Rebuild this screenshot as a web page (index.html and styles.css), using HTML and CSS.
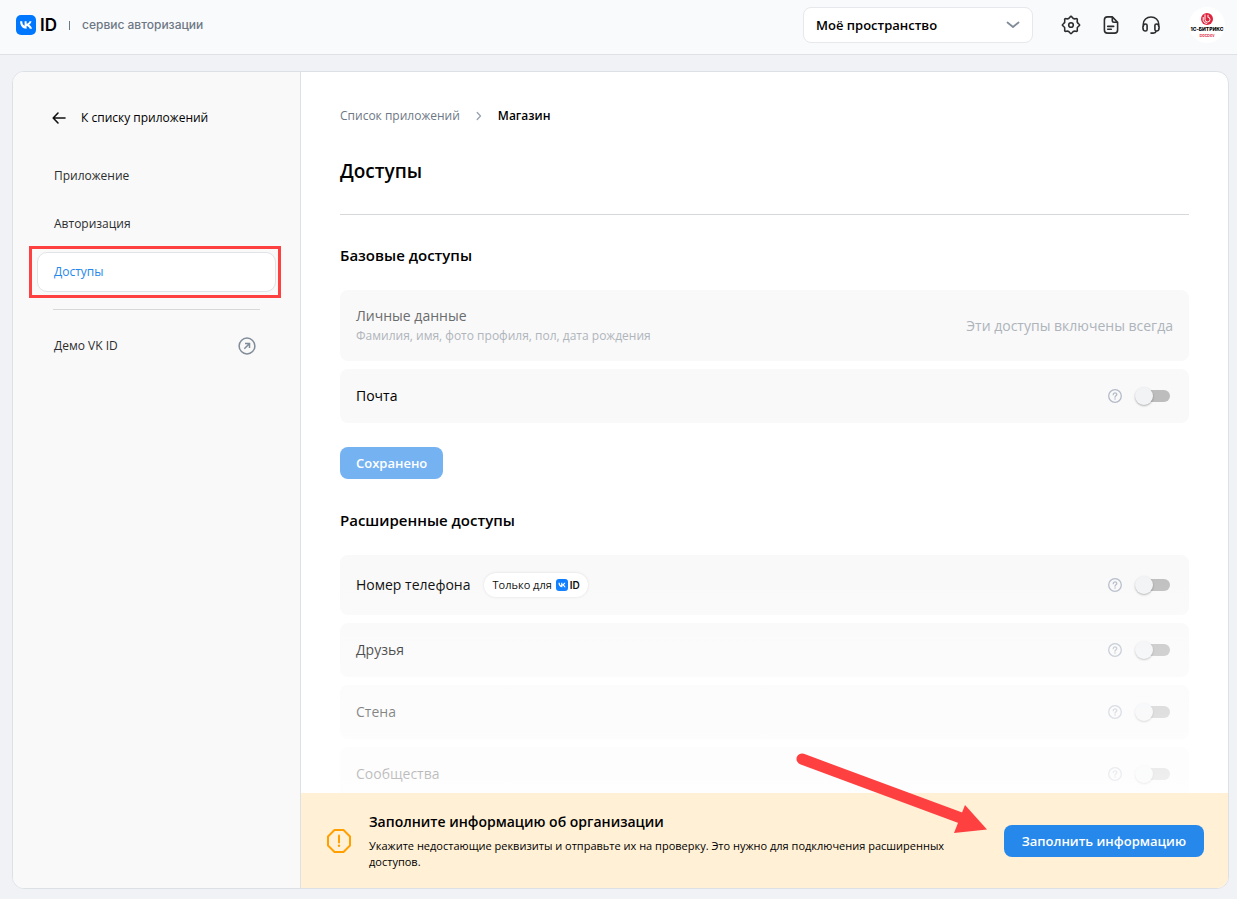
FILE: index.html
```html
<!DOCTYPE html>
<html lang="ru">
<head>
<meta charset="utf-8">
<meta name="viewport" content="width=device-width, initial-scale=1">
<title>VK ID — Доступы</title>
<link rel="stylesheet" href="styles.css">
</head>
<body>
<svg class="sprite" aria-hidden="true">
  <symbol id="vk" viewBox="0 0 20 20">
    <rect width="20" height="20" rx="5" fill="#0077ff"/>
    <path d="M3.400 6.200h2.100c.1 2.900 1.400 4.200 2.400 4.500V6.200h2v2.600c1.200-.1 2.400-1.300 2.900-2.600h2c-.3 1.700-1.600 3-2.500 3.600.9.400 2.400 1.500 3 3.900h-2.200c-.5-1.500-1.700-2.600-3.200-2.800v2.800h-.3C6.100 13.700 3.500 11 3.400 6.200z" fill="#fff" transform="translate(.7 0)"/>
  </symbol>
  <symbol id="help" viewBox="0 0 16 16">
    <circle cx="8" cy="8" r="6.300" fill="none" stroke="#b3bac8" stroke-width="1.300"/>
    <path d="M6.200 6.700C6.200 4.300 9.800 4.400 9.800 6.500 9.800 7.700 8 7.800 8 9.200" fill="none" stroke="#b3bac8" stroke-width="1.300" stroke-linecap="round"/>
    <circle cx="8" cy="11" r=".8" fill="#b3bac8"/>
  </symbol>
</svg>

<header class="topbar">
  <a class="brand" href="#">
    <svg class="brand-mark" aria-hidden="true"><use href="#vk"/></svg>
    <span class="brand-id">ID</span>
    <span class="brand-sep"></span>
    <span class="brand-sub">сервис авторизации</span>
  </a>
  <div class="space">
    <select class="space-select" aria-label="Пространство"><option>Моё пространство</option></select>
    <svg class="space-chevron" viewBox="0 0 14 8" aria-hidden="true"><path d="M1.500 1.500 7 6l5.500-4.500" fill="none" stroke="#818c99" stroke-width="1.800" stroke-linecap="round" stroke-linejoin="round"/></svg>
  </div>
  <nav class="tools" aria-label="Инструменты">
    <button class="tool" type="button" aria-label="Настройки">
      <svg viewBox="0 0 20 20"><path d="M11.190 2.340Q12.370 4.270 14.580 3.740Q16.790 3.210 16.260 5.420Q15.730 7.630 17.660 8.810Q19.600 10 17.660 11.190Q15.730 12.370 16.260 14.580Q16.790 16.790 14.580 16.260Q12.370 15.730 11.190 17.660Q10 19.600 8.810 17.660Q7.630 15.730 5.420 16.260Q3.210 16.790 3.740 14.580Q4.270 12.370 2.340 11.190Q.4 10 2.340 8.810Q4.270 7.630 3.740 5.420Q3.210 3.210 5.420 3.740Q7.630 4.270 8.810 2.340Q10 .4 11.190 2.340z"/><circle cx="10" cy="10" r="2.300"/></svg>
    </button>
    <button class="tool" type="button" aria-label="Документация">
      <svg viewBox="0 0 20 20"><path d="M11.300 1.900H6.500C4.300 1.900 3.400 3 3.400 5v10c0 2 .9 3.100 3.100 3.100h7c2.200 0 3.100-1.100 3.100-3.100V7.200zM11.300 2v3.600c0 1.200.5 1.700 1.700 1.700h3.500M6.700 11.400h6M6.700 14.200h3.600"/></svg>
    </button>
    <button class="tool" type="button" aria-label="Поддержка">
      <svg viewBox="0 0 20 20"><path d="M2.300 11.500V9.300C2.300 5 5.600 2 10 2S17.700 5 17.700 9.300v2.200M4.500 9c-1.500 0-2.600 1.300-2.600 3.400S3 16 4.500 16c1 0 1.600-.6 1.600-1.600v-3.800C6.100 9.600 5.500 9 4.500 9zM15.500 9c1.500 0 2.600 1.300 2.600 3.400S17 16 15.500 16c-1 0-1.600-.6-1.600-1.600v-3.800c0-1 .6-1.600 1.600-1.600zM15.400 16c-.5 1.400-1.700 2.100-3.200 2.100H10"/></svg>
    </button>
  </nav>
  <button class="avatar" type="button" aria-label="Профиль">
    <svg class="avatar-logo" viewBox="0 0 14 14" aria-hidden="true"><circle cx="7" cy="7" r="6" fill="#e0233c"/><path d="M5 2.500v5a2.500 2.500 0 1 0 2.500-2.500M8 2.800v2M3.200 5v3.500a4 4 0 0 0 4 3" fill="none" stroke="#fff" stroke-width="1"/></svg>
    <span class="avatar-name">1С-БИТРИКС</span>
    <span class="avatar-tag">DocDev</span>
  </button>
</header>

<div class="card">
  <aside class="sidebar">
    <a class="back" href="#">
      <svg class="back-icon" viewBox="0 0 14 14" aria-hidden="true"><path d="M13 7H1.500M6 2 1.200 7 6 12" fill="none" stroke="#111" stroke-width="1.600" stroke-linecap="round" stroke-linejoin="round"/></svg>
      К списку приложений
    </a>
    <nav class="menu" aria-label="Разделы">
      <a class="menu-item" href="#">Приложение</a>
      <a class="menu-item" href="#">Авторизация</a>
      <a class="menu-item menu-item-active" href="#" aria-current="page">Доступы</a>
    </nav>
    <hr class="menu-line">
    <a class="menu-item demo" href="#">Демо VK ID
      <svg class="demo-icon" viewBox="0 0 18 18" aria-hidden="true"><g fill="none" stroke="#818c99" stroke-width="1.500"><circle cx="9" cy="9" r="7.900"/><path d="M6.300 11.700l5-5M7 6.500h4.500V11"/></g></svg>
    </a>
  </aside>

  <main class="main">
    <div class="content">
      <nav class="crumbs" aria-label="Путь">
        <a class="crumb" href="#">Список приложений</a>
        <svg class="crumb-sep" viewBox="0 0 6 10" aria-hidden="true"><path d="M1.200 1.500 4.500 5 1.200 8.500" fill="none" stroke="#99a2ad" stroke-width="1.300" stroke-linecap="round" stroke-linejoin="round"/></svg>
        <span class="crumb-current">Магазин</span>
      </nav>
      <h1 class="title">Доступы</h1>

      <h2 class="subtitle">Базовые доступы</h2>
      <div class="rows">
        <div class="row row-info">
          <div class="row-text">
            <div class="row-name">Личные данные</div>
            <div class="row-desc">Фамилия, имя, фото профиля, пол, дата рождения</div>
          </div>
          <div class="row-note">Эти доступы включены всегда</div>
        </div>
        <div class="row">
          <label class="row-name" for="mail">Почта</label>
          <button class="help" type="button" aria-label="Подсказка: Почта"><svg><use href="#help"/></svg></button>
          <input class="switch" type="checkbox" role="switch" id="mail">
        </div>
      </div>
      <button class="button button-saved" type="button">Сохранено</button>

      <h2 class="subtitle">Расширенные доступы</h2>
      <div class="rows">
        <div class="row row-phone">
          <label class="row-name" for="phone">Номер телефона</label>
          <span class="chip">Только для <svg class="chip-mark" aria-hidden="true"><use href="#vk"/></svg><b class="chip-id">ID</b></span>
          <button class="help" type="button" aria-label="Подсказка: Номер телефона"><svg><use href="#help"/></svg></button>
          <input class="switch" type="checkbox" role="switch" id="phone">
        </div>
        <div class="row">
          <label class="row-name" for="friends">Друзья</label>
          <button class="help" type="button" aria-label="Подсказка: Друзья"><svg><use href="#help"/></svg></button>
          <input class="switch" type="checkbox" role="switch" id="friends">
        </div>
        <div class="row">
          <label class="row-name" for="wall">Стена</label>
          <button class="help" type="button" aria-label="Подсказка: Стена"><svg><use href="#help"/></svg></button>
          <input class="switch" type="checkbox" role="switch" id="wall">
        </div>
        <div class="row">
          <label class="row-name" for="groups">Сообщества</label>
          <button class="help" type="button" aria-label="Подсказка: Сообщества"><svg><use href="#help"/></svg></button>
          <input class="switch" type="checkbox" role="switch" id="groups">
        </div>
      </div>
    </div>

    <section class="banner">
      <svg class="banner-icon" viewBox="0 0 26 26" aria-hidden="true"><path d="M8.500 2h9L24 8.500v9L17.500 24h-9L2 17.500v-9z" fill="none" stroke="#ffa000" stroke-width="2" stroke-linejoin="round"/><path d="M13 7.500v7" stroke="#ffa000" stroke-width="2" stroke-linecap="round"/><circle cx="13" cy="17.800" r="1.200" fill="#ffa000"/></svg>
      <div class="banner-text">
        <h3 class="banner-title">Заполните информацию об организации</h3>
        <p class="banner-desc">Укажите недостающие реквизиты и отправьте их на проверку. Это нужно для подключения расширенных доступов.</p>
      </div>
      <button class="button button-fill" type="button">Заполнить информацию</button>
      <svg class="pointer" viewBox="0 0 194 84" aria-hidden="true"><path d="M9 9 168 68" stroke="#ff4040" stroke-width="11" stroke-linecap="round"/><path d="M172 55 194 79.500 161 83z" fill="#ff4040"/></svg>
    </section>
  </main>
</div>
</body>
</html>
```

FILE: styles.css
```css
* { box-sizing: border-box; }

body {
  margin: 0;
  height: 100vh;
  display: flex;
  flex-direction: column;
  background: #f0f2f5;
  color: #000;
  font-family: "Open Sans", "Noto Sans", sans-serif;
  font-size: 12px;
  line-height: 20px;
}

a { color: inherit; text-decoration: none; }
h1, h2, h3, p { margin: 0; }
button, select { font: inherit; color: inherit; }
button { border: 0; padding: 0; background: none; cursor: pointer; }
svg { display: block; flex: none; }
.sprite { position: absolute; width: 0; height: 0; }

/* Top bar */
.topbar {
  display: flex;
  align-items: center;
  flex: none;
  height: 55px;
  padding: 0 12px 4px 16px;
  background: #f9fafc;
  border-bottom: 1px solid #dfe1e5;
}
.brand {
  display: flex;
  align-items: center;
  margin-right: auto;
  font-family: Inter, sans-serif;
}
.brand-mark { width: 20px; height: 20px; }
.brand-id { margin-left: 4px; font-size: 17px; font-weight: 600; }
.brand-sep { width: 1px; height: 9px; margin: 0 12px; background: #6d7885; }
.brand-sub { color: #6d7885; font-size: 12px; font-weight: 500; }

.space { position: relative; width: 230px; }
.space-select {
  width: 100%;
  height: 36px;
  padding: 0 40px 0 12px;
  appearance: none;
  background: #fff;
  border: 1px solid #e7e8ec;
  border-radius: 8px;
  font-size: 13px;
  font-weight: 600;
}
.space-chevron {
  position: absolute;
  right: 13px;
  top: 14px;
  width: 14px;
  height: 8px;
  pointer-events: none;
}
.tools { display: flex; gap: 20px; margin: 0 28px; }
.tool { width: 20px; height: 20px; }
.tool svg {
  width: 20px;
  height: 20px;
  fill: none;
  stroke: #2c2d2e;
  stroke-width: 1.600;
  stroke-linecap: round;
  stroke-linejoin: round;
}
.avatar {
  display: flex;
  flex-direction: column;
  align-items: center;
  justify-content: center;
  width: 36px;
  height: 36px;
  border-radius: 50%;
  background: #fff;
  white-space: nowrap;
}
.avatar-logo { width: 14px; height: 14px; }
.avatar-name { font: 800 5px/7px Inter, sans-serif; }
.avatar-tag { color: #e0233c; font: 600 4px/6px Inter, sans-serif; }

/* Card */
.card {
  display: flex;
  flex: 1;
  min-height: 0;
  margin: 16px 8px 10px 12px;
  overflow: hidden;
  background: #fff;
  border: 1px solid #dce1e6;
  border-radius: 12px;
}

/* Sidebar */
.sidebar {
  display: flex;
  flex-direction: column;
  flex: none;
  width: 288px;
  padding: 36px 24px;
  background: #f9f9f9;
  border-right: 1px solid #dce1e6;
}
.back { display: flex; align-items: center; gap: 15px; padding-left: 15px; }
.back-icon { width: 14px; height: 14px; }
.menu { display: flex; flex-direction: column; gap: 8px; margin-top: 28px; }
.menu-item {
  position: relative;
  display: flex;
  align-items: center;
  height: 40px;
  padding: 0 16px;
  border: 1px solid transparent;
  border-radius: 10px;
  color: #2c2d2e;
}
.menu-item-active { background: #fff; border-color: #e1e3e6; color: #2688eb; }
.menu-item-active::after {
  content: "";
  position: absolute;
  inset: -7px -6px -7px -9px;
  border: 3px solid #ff4040;
}
.menu-line { width: 207px; margin: 17px 16px 16px; border: 0; border-top: 1px solid #d7d8d9; }
.demo { justify-content: space-between; }
.demo-icon { width: 18px; height: 18px; margin-right: 3px; }

/* Main column */
.main { display: flex; flex: 1; flex-direction: column; min-width: 0; }
.content {
  position: relative;
  flex: 1;
  min-height: 0;
  padding: 34px 39px 0;
  overflow: hidden;
}
.content::after {
  content: "";
  position: absolute;
  inset: auto 0 0;
  height: 228px;
  background: linear-gradient(rgba(255, 255, 255, 0), rgba(255, 255, 255, 0.8));
  pointer-events: none;
}
.crumbs { display: flex; align-items: center; gap: 16px; }
.crumb { color: #6d7885; }
.crumb-sep { width: 6px; height: 10px; }
.crumb-current { font-weight: 600; }
.title {
  padding: 31px 0 29px;
  border-bottom: 1px solid #d7d8d9;
  font-size: 19px;
  font-weight: 600;
  line-height: 28px;
}
.subtitle { margin: 30px 0 25px; font-size: 15px; font-weight: 600; line-height: 20px; }

.rows { display: flex; flex-direction: column; gap: 8px; }
.row {
  display: flex;
  align-items: center;
  flex: none;
  min-height: 54px;
  padding: 0 16px;
  border-radius: 8px;
  background: #f9f9f9;
}
.row-info { min-height: 71px; }
.row-phone { min-height: 60px; }
.row-name { font-size: 14px; line-height: 20px; }
.row-info .row-name { color: #6b6c6d; }
.row-desc { color: #b0b5bc; line-height: 20px; }
.row-note { margin-left: auto; color: #aeb4bb; font-size: 14px; }
.help { width: 16px; height: 16px; margin: 0 12px 0 auto; }
.help svg { width: 16px; height: 16px; }
.switch {
  position: relative;
  flex: none;
  width: 32px;
  height: 12px;
  margin: 0 3px;
  appearance: none;
  border-radius: 6px;
  background: #bdbdbd;
}
.switch::before {
  content: "";
  position: absolute;
  top: -3px;
  left: -3px;
  width: 18px;
  height: 18px;
  border-radius: 50%;
  background: #f2f3f5;
  box-shadow: 0 1px 2px rgba(0, 0, 0, 0.3);
}
.chip {
  display: flex;
  align-items: center;
  height: 24px;
  margin-left: 14px;
  padding: 0 8px;
  border-radius: 12px;
  background: #fff;
  box-shadow: 0 0 3px rgba(0, 0, 0, 0.12);
  font-size: 11px;
}
.chip-mark { width: 12px; height: 12px; margin: 0 2px 0 4px; }
.chip-id { font: 600 10px/16px Inter, sans-serif; }

.button {
  flex: none;
  height: 32px;
  padding: 0 16px;
  border-radius: 8px;
  color: #fff;
  font-size: 13px;
  font-weight: 600;
  white-space: nowrap;
}
.button-saved { display: block; margin: 24px 0 31px; background: #74b2f2; }
.button-fill { padding: 0 18px; background: #2688eb; }

/* Banner */
.banner {
  position: relative;
  display: flex;
  align-items: center;
  flex: none;
  min-height: 95px;
  padding: 0 24px 0 25px;
  background: #fff0d6;
}
.banner-icon { width: 26px; height: 26px; }
.banner-text { flex: 1; margin: 0 40px 0 17px; }
.banner-title { font-size: 14px; font-weight: 600; line-height: 20px; }
.banner-desc { margin-top: 6px; font-size: 11px; line-height: 16px; }
.pointer {
  position: absolute;
  right: 241px;
  bottom: 54px;
  width: 194px;
  height: 84px;
  fill: none;
  pointer-events: none;
}
```
